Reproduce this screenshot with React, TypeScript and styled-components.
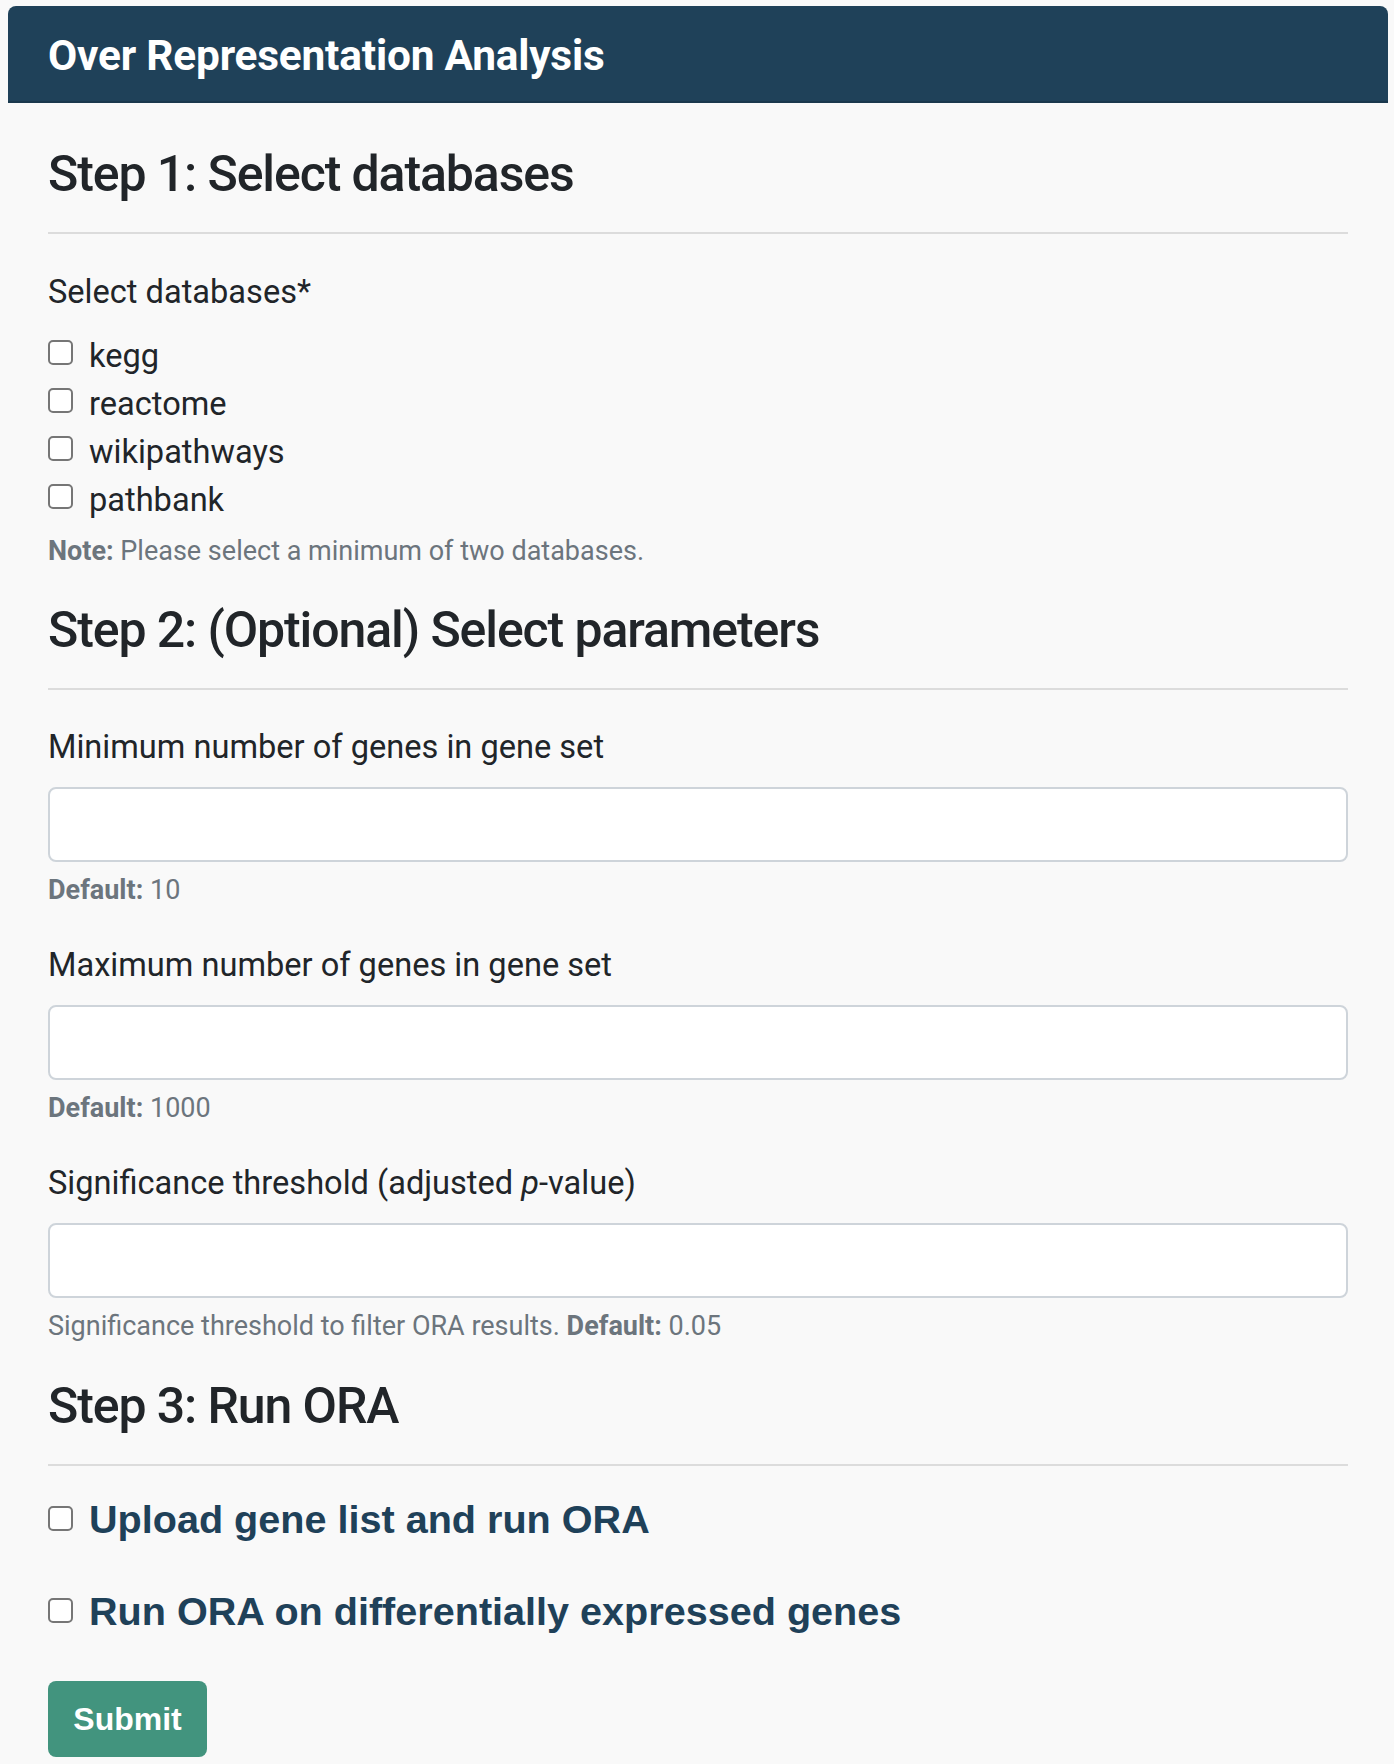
import React from 'react';
import styled, { createGlobalStyle } from 'styled-components';

const Colors = {
	page: '#f9f9f9',
	navy: '#1f4159',
	text: '#212529',
	muted: '#6c757d',
	rule: '#dcdcdc',
	field: '#ced4da',
	submit: '#42947e',
};

const GlobalStyle = createGlobalStyle`
	html, body {
		margin: 0;
		padding: 0;
		background: ${Colors.page};
	}
	body {
		font-family: Roboto, "Liberation Sans", sans-serif;
		color: ${Colors.text};
	}
`;

const databases = ['kegg', 'reactome', 'wikipathways', 'pathbank'];

export default function App() {
	return (
		<>
			<GlobalStyle />
			<Page>
				<Header>
					<HeaderTitle>Over Representation Analysis</HeaderTitle>
				</Header>
				<Content>
					<StepTitle>Step 1: Select databases</StepTitle>
					<Rule />
					<FieldLabel>Select databases*</FieldLabel>
					<CheckList>
						{databases.map((db) => (
							<CheckRow key={db}>
								<Box type="checkbox" />
								<span>{db}</span>
							</CheckRow>
						))}
					</CheckList>
					<HelpText $gap={6}><b>Note:</b> Please select a minimum of two databases.</HelpText>

					<StepTitle $gap={25}>Step 2: (Optional) Select parameters</StepTitle>
					<Rule />
					<Field $gap={33}>
						<FieldLabel>Minimum number of genes in gene set</FieldLabel>
						<TextInput type="text" />
						<HelpText $gap={7}><b>Default:</b> 10</HelpText>
					</Field>
					<Field $gap={30}>
						<FieldLabel>Maximum number of genes in gene set</FieldLabel>
						<TextInput type="text" />
						<HelpText $gap={7}><b>Default:</b> 1000</HelpText>
					</Field>
					<Field $gap={30}>
						<FieldLabel>Significance threshold (adjusted <i>p</i>-value)</FieldLabel>
						<TextInput type="text" />
						<HelpText $gap={7}>Significance threshold to filter ORA results. <b>Default:</b> 0.05</HelpText>
					</Field>

					<StepTitle $gap={26}>Step 3: Run ORA</StepTitle>
					<Rule />
					<OptionRow $gap={29}>
						<Box type="checkbox" />
						<span>Upload gene list and run ORA</span>
					</OptionRow>
					<OptionRow $gap={44}>
						<Box type="checkbox" />
						<span>Run ORA on differentially expressed genes</span>
					</OptionRow>
					<SubmitButton type="button">Submit</SubmitButton>
				</Content>
			</Page>
		</>
	);
}

const Page = styled.div`
	padding: 6px 6px 0 8px;
	min-height: 1758px;
	box-sizing: border-box;
`;

const Header = styled.div`
	height: 97px;
	box-sizing: border-box;
	display: flex;
	align-items: center;
	padding: 4px 40px 0;
	background: ${Colors.navy};
	border-bottom: 2px solid #1a384d;
	border-radius: 8px 8px 0 0;
`;

const HeaderTitle = styled.h1`
	margin: 0;
	font-size: 42.4px;
	font-weight: 700;
	color: #ffffff;
	letter-spacing: -0.2px;
`;

const Content = styled.div`
	padding: 0 40px;
	display: flex;
	flex-direction: column;
	align-items: flex-start;
`;

const StepTitle = styled.h2<{ $gap?: number }>`
	margin: ${(p) => p.$gap ?? 38}px 0 0;
	font-size: 50px;
	font-weight: 500;
	line-height: 66px;
	letter-spacing: -1.1px;
`;

const Rule = styled.hr`
	align-self: stretch;
	margin: 25px 0 0;
	border: none;
	border-top: 2px solid ${Colors.rule};
`;

const FieldLabel = styled.label`
	display: block;
	margin-top: 34px;
	font-size: 32.6px;
	line-height: 48px;
`;

const CheckList = styled.div`
	margin-top: 16px;
	display: flex;
	flex-direction: column;
`;

const CheckRow = styled.label`
	display: flex;
	align-items: center;
	gap: 16px;
	font-size: 32.6px;
	line-height: 48px;
	& > input {
		margin-top: -8px;
	}
`;

const Box = styled.input`
	appearance: none;
	margin: 0;
	flex: none;
	width: 25px;
	height: 25px;
	box-sizing: border-box;
	border: 2px solid #767676;
	border-radius: 5px;
	background: #ffffff;
`;

const HelpText = styled.div<{ $gap?: number }>`
	margin-top: ${(p) => p.$gap ?? 6}px;
	font-size: 27px;
	line-height: 42px;
	color: ${Colors.muted};
	b {
		font-weight: 700;
	}
`;

const Field = styled.div<{ $gap: number }>`
	align-self: stretch;
	margin-top: ${(p) => p.$gap}px;
	display: flex;
	flex-direction: column;
	${FieldLabel} {
		margin-top: 0;
	}
`;

const TextInput = styled.input`
	margin-top: 16px;
	height: 75px;
	box-sizing: border-box;
	border: 2px solid ${Colors.field};
	border-radius: 8px;
	background: #ffffff;
	padding: 0 24px;
	font-size: 32px;
	font-family: inherit;
	outline: none;
`;

const OptionRow = styled.label<{ $gap: number }>`
	margin-top: ${(p) => p.$gap}px;
	display: flex;
	align-items: center;
	gap: 16px;
	font-family: "Liberation Sans", Arial, sans-serif;
	font-weight: 700;
	font-size: 39.6px;
	line-height: 48px;
	color: ${Colors.navy};
	& > input {
		margin-top: -2px;
	}
`;

const SubmitButton = styled.button`
	margin-top: 46px;
	width: 159px;
	height: 76px;
	border: none;
	border-radius: 8px;
	background: ${Colors.submit};
	color: #ffffff;
	font-family: "Liberation Sans", Arial, sans-serif;
	font-weight: 700;
	font-size: 32px;
	padding: 0;
`;
